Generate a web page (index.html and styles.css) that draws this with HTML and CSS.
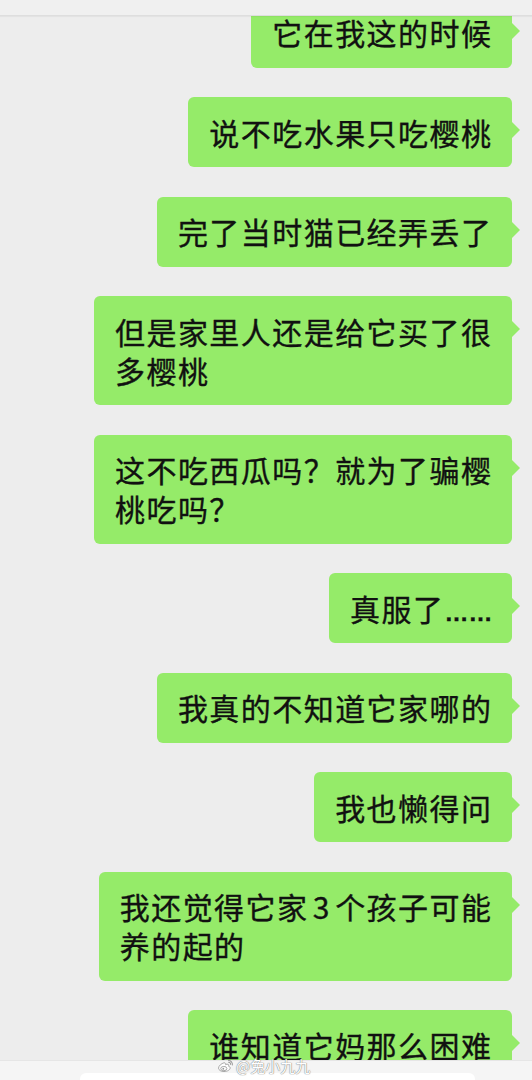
FILE: index.html
```html
<!DOCTYPE html>
<html lang="zh-CN">
<head>
<meta charset="utf-8">
<title>聊天</title>
<link rel="stylesheet" href="styles.css">
</head>
<body>
<div class="screen">
  <div class="topbar"></div>
  <div class="chat">
    <div class="bubble">它在我这的时候</div>
    <div class="bubble">说不吃水果只吃樱桃</div>
    <div class="bubble">完了当时猫已经弄丢了</div>
    <div class="bubble">但是家里人还是给它买了很<br>多樱桃</div>
    <div class="bubble">这不吃西瓜吗？就为了骗樱<br>桃吃吗？</div>
    <div class="bubble">真服了<span class="ell">……</span></div>
    <div class="bubble">我真的不知道它家哪的</div>
    <div class="bubble">我也懒得问</div>
    <div class="bubble">我还觉得它家<span class="num">3</span>个孩子可能<br>养的起的</div>
    <div class="bubble">谁知道它妈那么困难</div>
  </div>
  <div class="footer">
    <div class="input"></div>
    <div class="watermark">
      <svg class="wb" viewBox="0 0 20 16" width="17" height="14">
        <path d="M8.2 4.2c-3 .9-6.4 3.7-6.4 6.3 0 2.3 2.8 4 6.4 4 4.2 0 7.3-2.1 7.3-4.2 0-1.3-1.2-1.9-2-2.1.4-.9.4-1.9-.4-2.2-.9-.4-2.2.1-3 .5.3-.8.5-2.3-1.9-2.3z" fill="#fff" stroke="#9a9a9a" stroke-width="1"/>
        <ellipse cx="8" cy="11" rx="3.6" ry="2.5" fill="none" stroke="#9a9a9a" stroke-width="1"/>
        <circle cx="7.4" cy="11.2" r="1.1" fill="#9a9a9a"/>
        <path d="M13.5 1.6a4.5 4.5 0 0 1 4.6 5.2M13.6 3.6a2.4 2.4 0 0 1 2.5 2.7" fill="none" stroke="#9a9a9a" stroke-width="1.2" stroke-linecap="round"/>
      </svg>
      <span class="wm-text">@兔小九九</span>
    </div>
  </div>
</div>
</body>
</html>
```
FILE: styles.css
```css
html, body {
  margin: 0;
  padding: 0;
}
body {
  background: #ededed;
  font-family: "Noto Sans CJK SC", "Noto Sans", sans-serif;
}
.screen {
  position: relative;
  width: 532px;
  height: 1080px;
  overflow: hidden;
  background: #ededed;
}
.topbar {
  position: absolute;
  top: 0;
  left: 0;
  right: 0;
  height: 15px;
  background: #f0f0f0;
  border-bottom: 1px solid #dedede;
  box-shadow: 0 1px 1px rgba(0, 0, 0, 0.04);
  z-index: 2;
}
.chat {
  display: flex;
  flex-direction: column;
  align-items: flex-end;
  gap: 29.5px;
  margin-top: -2.5px;
  padding-right: 20px;
}
.bubble {
  position: relative;
  background: #95eb69;
  color: #111;
  font-size: 30px;
  letter-spacing: 1.45px;
  line-height: 39px;
  padding: 15.5px 19.6px 15.5px 21px;
  border-radius: 6px;
  white-space: nowrap;
  -webkit-text-stroke: 0.35px #111;
}
.bubble::after {
  content: "";
  position: absolute;
  right: -8px;
  top: 25px;
  width: 0;
  height: 0;
  border-top: 8px solid transparent;
  border-bottom: 8px solid transparent;
  border-left: 8px solid #95eb69;
}
.num {
  margin: 0 4.3px;
}
.ell {
  font-family: "Liberation Sans", sans-serif;
  font-size: 24px;
  font-weight: bold;
  letter-spacing: 0;
  line-height: 0;
}
.footer {
  position: absolute;
  left: 0;
  right: 0;
  bottom: 0;
  height: 20px;
  background: #f5f5f5;
  border-top: 1px solid #e6e6e6;
  padding: 12px 0 0 80px;
  box-sizing: border-box;
  z-index: 2;
}
.input {
  width: 395px;
  height: 20px;
  background: #fff;
  border-radius: 6px;
}
.watermark {
  position: absolute;
  left: 217px;
  top: -4px;
  display: flex;
  align-items: center;
  gap: 2px;
}
.wb {
  display: block;
}
.wm-text {
  font-family: "Noto Sans CJK SC", sans-serif;
  font-size: 15px;
  line-height: 18px;
  color: #fff;
  text-shadow: 0 0 1px #7a7a7a, 0 0 1px #7a7a7a;
}
```
